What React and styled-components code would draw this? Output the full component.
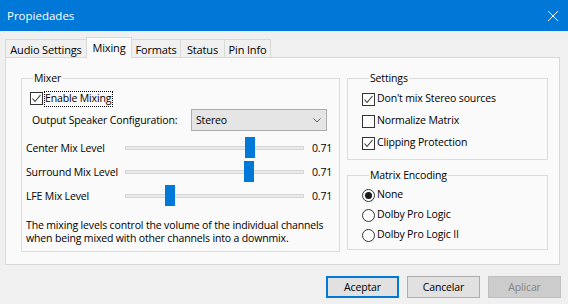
import styled, { createGlobalStyle } from "styled-components"

const FONT = `"Segoe UI", "Open Sans", "Noto Sans", sans-serif`

const GlobalStyle = createGlobalStyle`
  html, body {
    margin: 0;
    padding: 0;
    background: #f0f0f0;
  }
  body {
    font-family: ${FONT};
    font-size: 10.5px;
    letter-spacing: -0.15px;
    color: #000;
  }
  * {
    box-sizing: border-box;
  }
`

const sliders = [
  { label: "Center Mix Level", value: "0.71", pos: 0.71 },
  { label: "Surround Mix Level", value: "0.71", pos: 0.705 },
  { label: "LFE Mix Level", value: "0.71", pos: 0.237 },
]

const tabs = [
  { label: "Audio Settings", width: 82 },
  { label: "Mixing", width: 46, active: true },
  { label: "Formats", width: 50 },
  { label: "Status", width: 45 },
  { label: "Pin Info", width: 47 },
]

const CheckIcon = ({ checked }) => (
  <svg width="13" height="13" viewBox="0 0 13 13">
    <rect x="0.5" y="0.5" width="12" height="12" fill="#fff" stroke="#333" />
    {checked && (
      <polyline
        points="2.5,6.5 5,9.5 10.5,3"
        fill="none"
        stroke="#333"
        strokeWidth="1.1"
      />
    )}
  </svg>
)

const RadioIcon = ({ checked }) => (
  <svg width="13" height="13" viewBox="0 0 13 13">
    <circle cx="6.5" cy="6.5" r="6" fill="#fff" stroke="#333" />
    {checked && <circle cx="6.5" cy="6.5" r="3.5" fill="#1a1a1a" />}
  </svg>
)

const Check = ({ checked, focused, children }) => (
  <OptionRow>
    <CheckIcon checked={checked} />
    <OptionLabel $focused={focused}>{children}</OptionLabel>
  </OptionRow>
)

const Radio = ({ checked, children }) => (
  <OptionRow>
    <RadioIcon checked={checked} />
    <OptionLabel>{children}</OptionLabel>
  </OptionRow>
)

const Slider = ({ label, value, pos }) => (
  <SliderRow>
    <span>{label}</span>
    <Track>
      <TrackLine />
      <Thumb style={{ left: Math.round(pos * 169) }} />
    </Track>
    <SliderValue>{value}</SliderValue>
  </SliderRow>
)

const App = () => {
  return (
    <Window>
      <GlobalStyle />
      <TitleBar>
        <span>Propiedades</span>
        <CloseButton>
          <svg width="10" height="10" viewBox="0 0 10 10">
            <path d="M0 0 L10 10 M10 0 L0 10" stroke="#fff" strokeWidth="1" />
          </svg>
        </CloseButton>
      </TitleBar>

      <TabStrip>
        {tabs.map((t) => (
          <Tab key={t.label} $active={t.active} $width={t.width}>
            {t.label}
          </Tab>
        ))}
      </TabStrip>

      <Panel>
        <GroupBox $pad="5px 0 6px 4px">
          <Legend>Mixer</Legend>
          <Indent $left={4} $height={15}>
            <Check checked focused>
              Enable Mixing
            </Check>
          </Indent>
          <ConfigRow>
            <ConfigLabel>Output Speaker Configuration:</ConfigLabel>
            <Combo>
              <span>Stereo</span>
              <svg width="8" height="5" viewBox="0 0 8 5">
                <polyline
                  points="0.5,0.5 4,4 7.5,0.5"
                  fill="none"
                  stroke="#606060"
                />
              </svg>
            </Combo>
          </ConfigRow>
          <SliderList>
            {sliders.map((s) => (
              <Slider key={s.label} {...s} />
            ))}
          </SliderList>
          <Description>
            The mixing levels control the volume of the individual channels
            <br />
            when being mixed with other channels into a downmix.
          </Description>
        </GroupBox>

        <SideColumn>
          <GroupBox $pad="2px 0 5px 14px">
            <Legend>Settings</Legend>
            <OptionList $row={22}>
              <Check checked>Don't mix Stereo sources</Check>
              <Check>Normalize Matrix</Check>
              <Check checked>Clipping Protection</Check>
            </OptionList>
          </GroupBox>
          <GroupBox $pad="2px 0 4px 14px">
            <Legend>Matrix Encoding</Legend>
            <OptionList $row={20}>
              <Radio checked>None</Radio>
              <Radio>Dolby Pro Logic</Radio>
              <Radio>Dolby Pro Logic II</Radio>
            </OptionList>
          </GroupBox>
        </SideColumn>
      </Panel>

      <Footer>
        <Button $default>Aceptar</Button>
        <Button>Cancelar</Button>
        <Button disabled>Aplicar</Button>
      </Footer>
    </Window>
  )
}

const Window = styled.div`
  width: 568px;
  height: 304px;
  overflow: hidden;
  background: #f0f0f0;
  display: flex;
  flex-direction: column;
`

const TitleBar = styled.div`
  height: 31px;
  flex: none;
  background: #0078d7;
  color: #fff;
  font-size: 11.5px;
  letter-spacing: 0;
  display: flex;
  align-items: center;
  justify-content: space-between;
  padding-left: 7px;
`

const CloseButton = styled.div`
  width: 30px;
  height: 31px;
  display: flex;
  align-items: center;
  justify-content: center;
`

const TabStrip = styled.div`
  height: 26px;
  flex: none;
  display: flex;
  align-items: flex-end;
  padding-left: 5px;
`

const Tab = styled.div`
  width: ${(p) => p.$width}px;
  height: ${(p) => (p.$active ? 21 : 18)}px;
  margin-left: -1px;
  margin-bottom: ${(p) => (p.$active ? -1 : 0)}px;
  padding-top: ${(p) => (p.$active ? 0 : 2)}px;
  padding-bottom: ${(p) => (p.$active ? 2 : 0)}px;
  border: 1px solid #d9d9d9;
  border-bottom: none;
  background: ${(p) => (p.$active ? "#fafafa" : "#f0f0f0")};
  position: relative;
  z-index: ${(p) => (p.$active ? 1 : 0)};
  display: flex;
  align-items: center;
  justify-content: center;
  white-space: nowrap;
  font-size: 11px;

  &:first-child {
    margin-left: 0;
  }
`

const Panel = styled.div`
  margin: 0 8px 0 5px;
  height: 208px;
  flex: none;
  border: 1px solid #d9d9d9;
  background: #fafafa;
  display: grid;
  grid-template-columns: 319px 201px;
  column-gap: 7px;
  align-items: start;
  padding: 12px 0 0 15px;
`

const GroupBox = styled.fieldset`
  margin: 0;
  min-width: 0;
  border: 1px solid #dcdcdc;
  padding: ${(p) => p.$pad};
`

const Legend = styled.legend`
  margin-left: 7px;
  padding: 0 1px;
  line-height: 16px;
  height: 16px;
`

const SideColumn = styled.div`
  display: flex;
  flex-direction: column;
  gap: 7px;
`

const Indent = styled.div`
  margin-left: ${(p) => p.$left}px;
  height: ${(p) => p.$height}px;
  display: flex;
  align-items: center;
`

const OptionList = styled.div`
  display: grid;
  grid-auto-rows: ${(p) => p.$row}px;
  align-items: center;
`

const OptionRow = styled.div`
  display: flex;
  align-items: center;
  gap: 2px;
  white-space: nowrap;

  svg {
    flex: none;
  }
`

const OptionLabel = styled.span`
  line-height: 13px;
  padding: 0 1px 1px 0;
  outline: ${(p) => (p.$focused ? "1px dotted #000" : "none")};
  outline-offset: 0;
`

const ConfigRow = styled.div`
  margin: 3px 0 0 6px;
  height: 22px;
  display: flex;
  align-items: center;
`

const ConfigLabel = styled.span`
  width: 159px;
  white-space: nowrap;
`

const Combo = styled.div`
  width: 136px;
  height: 22px;
  border: 1px solid #adadad;
  background: #e5e5e5;
  display: flex;
  align-items: center;
  justify-content: space-between;
  padding: 0 5px 0 4px;
`

const SliderList = styled.div`
  margin-top: 5px;
`

const SliderRow = styled.div`
  height: 24px;
  display: grid;
  grid-template-columns: 99px 179px auto;
  align-items: center;
  white-space: nowrap;
`

const SliderValue = styled.span`
  padding-left: 8px;
`

const Track = styled.div`
  position: relative;
  height: 24px;
  display: flex;
  align-items: center;
`

const TrackLine = styled.div`
  width: 100%;
  height: 4px;
  background: #e7eaea;
  border: 1px solid #d6d6d6;
`

const Thumb = styled.div`
  position: absolute;
  top: 1px;
  width: 10px;
  height: 21px;
  background: #0078d7;
`

const Description = styled.p`
  margin: 11px 0 0;
  line-height: 13px;
  white-space: nowrap;
`

const Footer = styled.div`
  display: flex;
  justify-content: flex-end;
  gap: 8px;
  padding: 11px 7px 0 0;
`

const Button = styled.button`
  width: 73px;
  height: 22px;
  font-family: ${FONT};
  font-size: 10.5px;
  letter-spacing: -0.15px;
  color: #000;
  background: #e1e1e1;
  border: ${(p) => (p.$default ? "2px solid #0078d7" : "1px solid #adadad")};
  padding: 0;
  margin: 0;

  &:disabled {
    background: #cccccc;
    border-color: #bfbfbf;
    color: #838383;
  }
`

export default App
